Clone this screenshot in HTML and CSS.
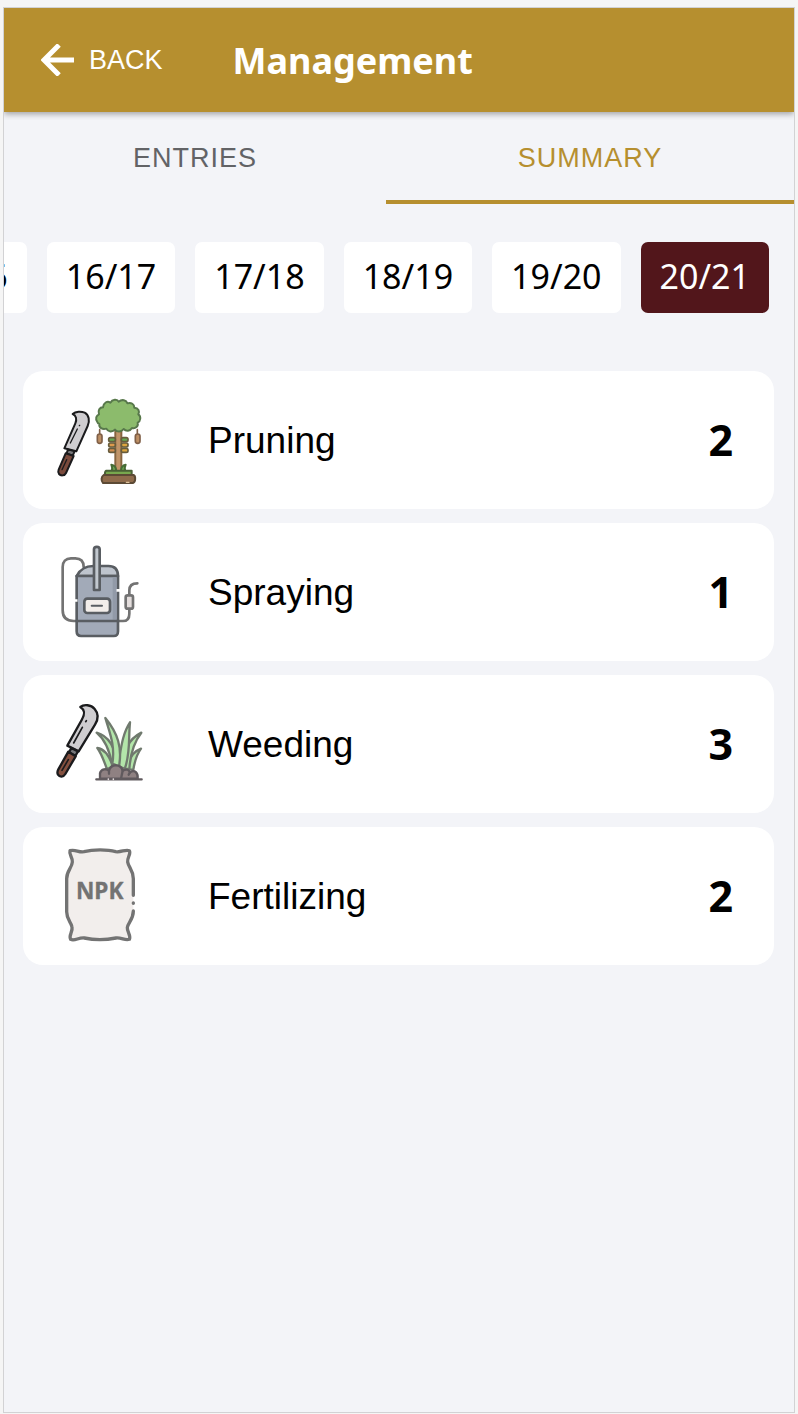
FILE: index.html
```html
<!DOCTYPE html>
<html lang="en">
  <head>
    <meta charset="utf-8" />
    <meta name="viewport" content="width=device-width, initial-scale=1" />
    <title>Management</title>
    <link rel="stylesheet" href="styles.css">
  </head>

  <body>
    <div class="screen">
      <header class="header">
        <button class="back" type="button">
          <svg class="back-icon" viewBox="0 0 34 32" aria-hidden="true">
            <path d="M33 16H3M18 1 3 16l15 15" />
          </svg>
          BACK
        </button>
        <h1 class="title">Management</h1>
      </header>

      <div class="tabs" role="tablist">
        <button class="tab" type="button" role="tab" aria-selected="false">ENTRIES</button>
        <button class="tab active" type="button" role="tab" aria-selected="true">SUMMARY</button>
      </div>

      <div class="seasons">
        <button class="season" type="button">15/16</button>
        <button class="season" type="button">16/17</button>
        <button class="season" type="button">17/18</button>
        <button class="season" type="button">18/19</button>
        <button class="season" type="button">19/20</button>
        <button class="season selected" type="button">20/21</button>
      </div>

      <ul class="cards">
        <li class="card">
          <svg class="card-icon" viewBox="0 0 330 330" aria-hidden="true">
            <!-- knife -->
            <g stroke="#1b1b1d" stroke-width="6" stroke-linejoin="round" stroke-linecap="round">
              <path fill="#cfcdd0" d="M83 87C92 79 108 78 119 83C132 90 135 107 128 123L94 199L58 190L91 115C96 103 94 91 83 87Z" />
              <path fill="#77777a" d="M69 193L89 199L83 212L65 205Z" />
              <path fill="#7a4a3c" d="M62 205L86 213L63 264C59 273 47 273 42 267C39 263 39 259 41 254Z" />
              <path fill="none" stroke-width="4" d="M76 174L97 132M103 122L104 121M65 224L51 254" />
            </g>
            <!-- tree -->
            <g stroke="#59643f" stroke-width="6" stroke-linejoin="round" stroke-linecap="round">
              <path fill="#8a7857" d="M211 134H229V256H211Z" stroke="#87643f" />
              <path fill="#c19468" stroke="none" d="M214 138H226V256H214Z" />
              <path fill="#8cbb6c" stroke="#58784b" d="M157 111C150 101 154 91 162 88C158 76 164 67 174 67C175 54 187 46 196 53C202 42 217 41 221 50C231 42 244 45 247 55C259 51 268 58 268 68C280 69 285 79 280 88C289 94 287 109 278 113C281 124 271 132 261 129C255 139 243 140 236 132C228 142 216 142 210 134C202 142 189 141 184 131C172 135 161 128 163 117C160 116 158 114 157 111Z" />
              <g fill="#bd8f64" stroke="#806048" stroke-width="5">
                <path d="M164 134V146M277 134V146" />
                <rect x="157" y="147" width="14" height="28" rx="7" />
                <rect x="271" y="147" width="14" height="28" rx="7" />
              </g>
              <g stroke="#675c3d" stroke-width="5">
                <rect fill="#65a952" x="191" y="158" width="20" height="12" rx="5" />
                <rect fill="#65a952" x="229" y="158" width="20" height="12" rx="5" />
                <rect fill="#dd9a4c" x="191" y="174" width="20" height="12" rx="5" />
                <rect fill="#dda53f" x="229" y="174" width="20" height="12" rx="5" />
                <rect fill="#d18b4d" x="191" y="190" width="20" height="12" rx="5" />
                <rect fill="#dda53f" x="229" y="190" width="20" height="12" rx="5" />
              </g>
              <path fill="#72ad53" stroke="#466b36" d="M200 257C204 252 201 245 199 239C209 240 213 247 214 258ZM228 258C228 247 232 241 242 239C239 246 237 252 241 258Z" />
              <path fill="#78a84e" stroke="#4a6136" d="M184 257H260V270H180C179 263 180 259 184 257Z" />
              <path fill="#8f6b4b" stroke="#5c4a35" d="M176 270H265C273 272 272 292 264 294H174C168 288 168 275 176 270Z" />
              <path stroke="#dec29c" stroke-width="4" d="M244 292H252" />
            </g>
          </svg>
          <span class="card-name">Pruning</span>
          <span class="card-count">2</span>
        </li>

        <li class="card">
          <svg class="card-icon" viewBox="0 6 330 330" aria-hidden="true">
            <g fill="none" stroke="#737373" stroke-width="8" stroke-linecap="round" stroke-linejoin="round">
              <path d="M116 96C116 79 107 70 91 70H78C62 70 53 80 53 96V226C53 247 65 258 86 258H94M222 258H234C249 258 253 248 253 236V222M253 179V166C253 151 261 145 277 145" />
              <rect fill="#e4dedd" x="242" y="181" width="22" height="40" rx="6" />
            </g>
            <g stroke="#595d62" stroke-width="8" stroke-linecap="round" stroke-linejoin="round">
              <path fill="#bec4cd" d="M95 123C104 105 121 93 145 93H190C209 93 219 103 219 123Z" />
              <path fill="#a2aab8" d="M95 123H219V289C219 300 215 303 206 303H108C99 303 95 299 95 289Z" />
              <path stroke="none" fill="#929aa8" d="M203 127H215V254H203Z" />
              <path d="M95 258H219" fill="none" />
              <path fill="#c2c8cf" d="M147 165V43C147 33 164 33 164 43V165Z" />
              <rect fill="#f3eeea" x="118" y="191" width="77" height="43" rx="9" />
              <path fill="none" d="M140 212H171" stroke-width="6" />
            </g>
            <path d="M92 193V200M220 162V170" stroke="#fff" stroke-width="11" />
          </svg>
          <span class="card-name">Spraying</span>
          <span class="card-count">1</span>
        </li>

        <li class="card">
          <svg class="card-icon" viewBox="0 -3 330 330" aria-hidden="true">
            <!-- knife -->
            <g stroke="#1b1b1d" stroke-width="7" stroke-linejoin="round" stroke-linecap="round">
              <path fill="#cfcdd0" d="M106 51C117 42 138 44 149 57C161 71 160 88 150 104L101 184L67 167L110 90C121 71 120 60 106 51Z" />
              <path fill="#77777a" d="M79 174L99 184L91 198L72 187Z" />
              <path fill="#84503f" d="M70 185L92 199L61 252C55 262 44 262 39 254C36 249 37 244 40 238Z" />
              <path fill="none" stroke-width="5" d="M86 159L112 112M122 95L124 92M70 209L51 241" />
            </g>
            <!-- grass -->
            <g fill="#b3e6aa" stroke="#707a6e" stroke-width="7" stroke-linejoin="round" stroke-linecap="round">
              <path d="M186 238C177 212 169 190 157 174C178 177 192 194 204 229Z" />
              <path d="M244 238C251 207 265 184 288 176C274 195 269 214 265 239Z" />
              <path d="M202 230C195 182 181 150 155 128C190 138 211 169 216 226Z" />
              <path d="M234 236C235 183 249 148 289 128C266 157 256 193 253 237Z" />
              <path d="M219 227C228 178 231 133 255 97C250 142 257 190 239 237Z" />
              <path d="M202 221C211 167 194 128 181 84C219 130 232 174 222 229Z" />
            </g>
            <g fill="#8f8182" stroke="#605a5e" stroke-width="7" stroke-linejoin="round" stroke-linecap="round">
              <path d="M165 266V250C168 236 185 235 192 242C199 219 228 222 233 242C246 235 252 240 255 247C269 236 280 250 278 266Z" />
              <path fill="none" d="M192 242V251M233 242L228 266M255 247L251 254M154 268H290" />
              <path stroke="#e7dfe0" stroke-width="5" d="M190 267V268M205 267V268" />
            </g>
          </svg>
          <span class="card-name">Weeding</span>
          <span class="card-count">3</span>
        </li>

        <li class="card">
          <svg class="card-icon" viewBox="0 18 330 330" aria-hidden="true">
            <path fill="#f2eeec" d="M75 47C91 42 101 53 117 50C144 43 187 43 212 50C228 53 241 42 253 47C259 56 246 68 248 81C251 99 265 105 265 131V228C265 254 249 262 247 278C246 290 259 302 253 313C241 318 229 307 213 309C184 315 145 315 118 309C101 307 89 319 77 313C70 301 84 291 81 276C79 261 65 255 65 230V131C65 107 81 99 82 81C84 68 71 59 75 47Z" />
            <path fill="none" stroke="#737373" stroke-width="10" stroke-linecap="round" stroke-linejoin="round" d="M265 181V131C265 105 251 99 248 81C246 68 259 56 253 47C241 42 228 53 212 50C187 43 144 43 117 50C101 53 91 42 75 47C71 59 84 68 82 81C81 99 65 107 65 131V230C65 255 79 261 81 276C84 291 70 301 77 313C89 319 101 307 118 309C145 315 184 315 213 309C229 307 241 318 253 313C259 302 246 290 247 278C249 262 265 254 265 228M265 204V205" />
            <text class="npk" x="164" y="192" text-anchor="middle">NPK</text>
          </svg>
          <span class="card-name">Fertilizing</span>
          <span class="card-count">2</span>
        </li>
      </ul>
    </div>
  </body>
</html>
```

FILE: styles.css
```css
* {
  box-sizing: border-box;
}

body {
  margin: 0;
  padding: 7px 3px 1px;
  min-height: 100vh;
  display: flex;
  background-color: #f5f5f5;
  color: #000;
  font-family: "Liberation Sans", Arial, sans-serif;
}

button {
  margin: 0;
  padding: 0;
  border: 0;
  background: none;
  font: inherit;
  color: inherit;
  cursor: pointer;
}

.screen {
  flex: 1;
  min-width: 0;
  border: 1px solid #d2d2d4;
  background-color: #f3f4f8;
}

/* header */
.header {
  display: flex;
  align-items: center;
  gap: 70px;
  height: 104px;
  padding: 0 37px;
  background-color: #b68f2f;
  color: #fff;
  box-shadow: 0 2px 6px rgba(0, 0, 0, 0.35);
  clip-path: inset(0 0 -8px 0);
}

.back {
  display: flex;
  align-items: center;
  gap: 14px;
  font-size: 27px;
}

.back-icon {
  width: 34px;
  height: 32px;
  fill: none;
  stroke: #fff;
  stroke-width: 5;
}

.title {
  margin: 0;
  font-family: "Noto Sans", sans-serif;
  font-size: 36px;
  font-weight: 700;
}

/* tabs */
.tabs {
  display: grid;
  grid-template-columns: 382fr 408fr;
  height: 92px;
}

.tab {
  padding-top: 4px;
  border-bottom: 4px solid transparent;
  font-size: 27px;
  letter-spacing: 1px;
  color: #626366;
}

.tab.active {
  border-color: #b68f2f;
  color: #b68f2f;
}

/* seasons, the latest one stays in view */
.seasons {
  display: flex;
  justify-content: flex-end;
  gap: 20px;
  padding: 38px 25px 58px 0;
  overflow: hidden;
}

.season {
  flex: none;
  height: 71px;
  padding: 0 19px 4px;
  border-radius: 7px;
  background-color: #fff;
  font-family: "Noto Sans", sans-serif;
  font-size: 34px;
}

.season.selected {
  background-color: #52161b;
  color: #fff;
}

/* summary cards */
.cards {
  display: flex;
  flex-direction: column;
  gap: 14px;
  margin: 0;
  padding: 0 20px 0 19px;
  list-style: none;
}

.card {
  display: flex;
  align-items: center;
  height: 138px;
  padding: 0 41px 2px 22px;
  border-radius: 20px;
  background-color: #fff;
}

.card-icon {
  flex: none;
  width: 110px;
  height: 110px;
  margin: 2px 53px 0 0;
}

.card-name {
  flex: 1;
  padding-top: 4px;
  font-size: 37px;
}

.card-count {
  font-family: "Noto Sans", sans-serif;
  font-size: 43px;
  font-weight: 700;
}

.npk {
  fill: #737373;
  stroke: #737373;
  stroke-width: 1;
  stroke-linejoin: round;
  font-family: "Noto Sans", sans-serif;
  font-size: 68px;
  font-weight: 700;
}
```
